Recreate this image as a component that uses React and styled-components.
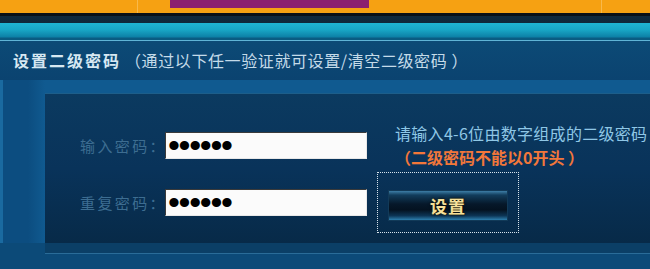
import styled, { createGlobalStyle } from "styled-components";

const GlobalStyle = createGlobalStyle`
  html, body {
    margin: 0;
    padding: 0;
    background: #0c4a78;
  }
  body {
    font-family: "Noto Sans CJK SC", "Noto Sans", sans-serif;
  }
`;

export default function App() {
  return (
    <>
      <GlobalStyle />
      <Page>
        <TopBar>
          <TopCell $width="137px" />
          <TopCell $grow>
            <Tab />
          </TopCell>
          <TopCell $width="48px" $left />
        </TopBar>
        <Rim />
        <TitleBar>
          <TitleMain>设置二级密码</TitleMain>
          <TitleNote>（通过以下任一验证就可设置/清空二级密码 ）</TitleNote>
        </TitleBar>
        <Body>
          <Panel>
            <FormGrid>
              <Label>输入密码：</Label>
              <Field type="password" defaultValue="123456" readOnly />
              <Hint>
                <HintLine>请输入4-6位由数字组成的二级密码</HintLine>
                <Warning>（二级密码不能以0开头 ）</Warning>
              </Hint>

              <Label>重复密码：</Label>
              <Field type="password" defaultValue="123456" readOnly />
              <ButtonFrame>
                <SetButton>设置</SetButton>
              </ButtonFrame>
            </FormGrid>
          </Panel>
        </Body>
        <Footer />
      </Page>
    </>
  );
}

const Page = styled.div`
  width: 650px;
  height: 269px;
  overflow: hidden;
  display: flex;
  flex-direction: column;
  background: #0c4a78;
`;

const TopBar = styled.div`
  height: 13px;
  display: flex;
  background: #f6a112;
`;

const TopCell = styled.div`
  width: ${(p) => p.$width || "auto"};
  flex: ${(p) => (p.$grow ? 1 : "none")};
  border-right: ${(p) => (p.$grow || p.$left ? "none" : "1px solid rgba(255, 230, 180, 0.35)")};
  border-left: ${(p) => (p.$left ? "1px solid rgba(255, 230, 180, 0.35)" : "none")};
`;

const Tab = styled.div`
  margin-left: 32px;
  width: 199px;
  height: 8px;
  background: #8b1f6f;
`;

const Rim = styled.div`
  height: 27px;
  border-bottom: 1px solid #5fb4d6;
  background: linear-gradient(
    to bottom,
    #0a1016 0px,
    #0a1016 3px,
    #11293c 3px,
    #0f2738 10px,
    #1fb4d2 10px,
    #18a5c5 17px,
    #0d80a6 24px,
    #0a5c84 25px,
    #0a5a80 27px
  );
`;

const TitleBar = styled.div`
  height: 39px;
  display: flex;
  align-items: center;
  padding-left: 13px;
  padding-bottom: 2px;
  box-sizing: border-box;
  background: linear-gradient(to bottom, #0c4a76, #0b4370);
  white-space: nowrap;
  font-size: 16px;
`;

const TitleMain = styled.span`
  color: #d6e8f2;
  font-weight: bold;
  letter-spacing: 2px;
  margin-right: 4px;
`;

const TitleNote = styled.span`
  color: #c4dbe9;
  letter-spacing: 0.6px;
`;

const Body = styled.div`
  padding: 13px 0 0 42px;
  border-left: 3px solid #1a6aa0;
  background: linear-gradient(to right, #0c4d80 0px, #0c4d80 25px, #105a90 42px);
`;

const Panel = styled.div`
  height: 150px;
  box-sizing: border-box;
  border-top: 1px solid #1d5e8a;
  background: linear-gradient(to bottom, #0b3a60 0%, #09335a 50%, #072a48 100%);
  padding: 27px 0 0 35px;
`;

const FormGrid = styled.div`
  display: grid;
  grid-template-columns: 75px 202px auto;
  grid-template-rows: 48px 61px;
  column-gap: 10px;
  row-gap: 3px;
  align-items: center;
`;

const Label = styled.span`
  color: #3d6d91;
  font-size: 15px;
  letter-spacing: 2.4px;
  white-space: nowrap;
`;

const Field = styled.input`
  width: 202px;
  height: 27px;
  box-sizing: border-box;
  margin: 0;
  padding: 0 2px;
  border: 1px solid;
  border-color: #3a3a3a #e8e8e8 #e8e8e8 #3a3a3a;
  background: #fbfbfb;
  color: #000;
  font-family: "Liberation Sans", sans-serif;
  font-size: 34px;
  letter-spacing: -1.3px;
  outline: none;
`;

const Hint = styled.div`
  padding-left: 18px;
  font-size: 16px;
  line-height: 24px;
  white-space: nowrap;
`;

const HintLine = styled.div`
  color: #8fc7e6;
  letter-spacing: 0.3px;
`;

const Warning = styled.div`
  color: #f2773a;
  font-weight: bold;
`;

const ButtonFrame = styled.div`
  width: 142px;
  height: 61px;
  box-sizing: border-box;
  border: 1px dotted #d8e4ec;
  padding: 17px 0 0 10px;
`;

const SetButton = styled.button`
  width: 120px;
  height: 31px;
  padding: 0;
  border: 1px solid #123a58;
  background: linear-gradient(
    to bottom,
    #3d7ea6 0%,
    #123d5c 14%,
    #06182a 45%,
    #041220 65%,
    #0c3454 85%,
    #2d7fae 100%
  );
  color: #f6e09a;
  font-family: "Noto Sans CJK SC", sans-serif;
  font-size: 17px;
  font-weight: bold;
  letter-spacing: 1px;
  text-shadow: 0 0 3px #000, 0 0 1px #7a6020;
  cursor: pointer;
`;

const Footer = styled.div`
  flex: 1;
  margin-left: 45px;
  border-top: 10px solid #0b3f66;
  background: linear-gradient(to bottom, #2a6c98 0px, #2a6c98 1px, #0c4a78 1px);
`;
